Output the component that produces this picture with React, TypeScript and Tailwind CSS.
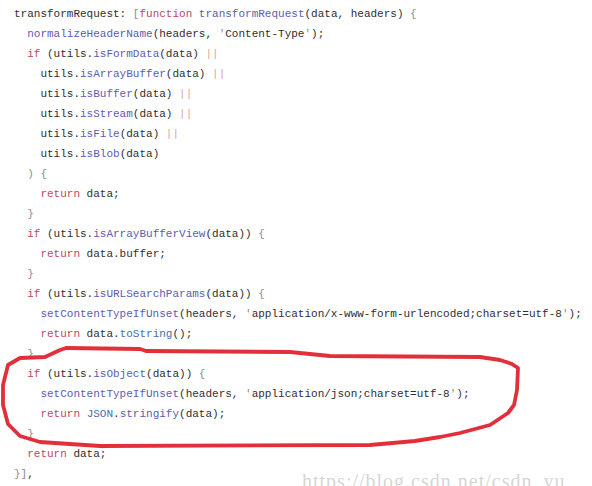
import React from 'react';

const K = ({ children }: { children: React.ReactNode }) => <span className="text-[#c24568]">{children}</span>;
const F = ({ children }: { children: React.ReactNode }) => <span className="text-[#5d5cb0]">{children}</span>;
const B = ({ children }: { children: React.ReactNode }) => <span className="text-[#3f6fb3]">{children}</span>;
const O = ({ children }: { children: React.ReactNode }) => <span className="text-[#e3a0a0]">{children}</span>;
const P = ({ children }: { children: React.ReactNode }) => <span className="text-[#8c8c8c]">{children}</span>;

const lines: React.ReactNode[] = [
  <>transformRequest: <P>[</P><K>function</K> <F>transformRequest</F>(data, headers) <P>{'{'}</P></>,
  <>  <F>normalizeHeaderName</F>(headers, <P>'</P>Content-Type<P>'</P>);</>,
  <>  <K>if</K> (utils.<F>isFormData</F>(data) <O>||</O></>,
  <>    utils.<F>isArrayBuffer</F>(data) <O>||</O></>,
  <>    utils.<F>isBuffer</F>(data) <O>||</O></>,
  <>    utils.<F>isStream</F>(data) <O>||</O></>,
  <>    utils.<F>isFile</F>(data) <O>||</O></>,
  <>    utils.<F>isBlob</F>(data)</>,
  <>  <P>) {'{'}</P></>,
  <>    <K>return</K> data;</>,
  <>  <P>{'}'}</P></>,
  <>  <K>if</K> (utils.<F>isArrayBufferView</F>(data)) <P>{'{'}</P></>,
  <>    <K>return</K> data.buffer;</>,
  <>  <P>{'}'}</P></>,
  <>  <K>if</K> (utils.<F>isURLSearchParams</F>(data)) <P>{'{'}</P></>,
  <>    <F>setContentTypeIfUnset</F>(headers, <P>'</P>application/x-www-form-urlencoded;charset=utf-8<P>'</P>);</>,
  <>    <K>return</K> data.<B>toString</B>();</>,
  <>  <P>{'}'}</P></>,
  <>  <K>if</K> (utils.<F>isObject</F>(data)) <P>{'{'}</P></>,
  <>    <F>setContentTypeIfUnset</F>(headers, <P>'</P>application/json;charset=utf-8<P>'</P>);</>,
  <>    <K>return</K> <B>JSON</B>.<F>stringify</F>(data);</>,
  <>  <P>{'}'}</P></>,
  <>  <K>return</K> data;</>,
  <><P>{'}'}]</P>,</>,
];

export default function App() {
  return (
    <div className="relative w-[592px] h-[486px] overflow-hidden bg-white">
      <pre className="pl-[14px] pt-[4px] font-['Liberation_Mono',monospace] text-[11px] leading-[20px] text-[#2e2e2e]">
        {lines.map((l, i) => (
          <div key={i} className="h-[20px]">{l}</div>
        ))}
      </pre>

      {/* hand-drawn highlight */}
      <svg className="absolute left-0 top-0" width="592" height="486" viewBox="0 0 592 486">
        <path
          d="M60 350 L66 348 L140 349 L146 351 L290 352 L300 353 L330 356 L480 357 L500 360 L512 364 L518 368 L517 390 L514 405 L508 413 L490 425 L460 433 L440 437 L415 441 L370 445 L100 446 L40 442 L20 436 L8 424 L3 405 L3 385 L8 365 L20 358 L45 357 L60 350"
          fill="none"
          stroke="#e2303a"
          strokeWidth="3.8"
          strokeLinejoin="round"
        />
      </svg>

      <div className="absolute left-[302px] top-[471px] whitespace-nowrap font-['Liberation_Serif',serif] text-[20px] leading-[20px] tracking-[1px] text-[#d6d6d6]">
        https://blog.csdn.net/csdn_yu
      </div>
    </div>
  );
}
